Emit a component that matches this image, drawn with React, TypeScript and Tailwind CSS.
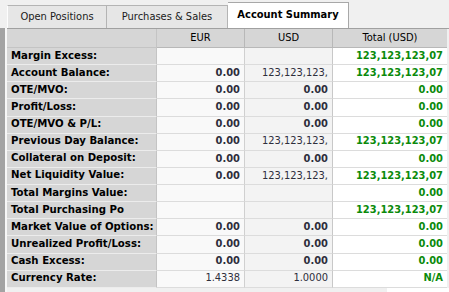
import React from "react";

type Row = {
  label: string;
  eur: string;
  eurBold?: boolean;
  usd: string;
  usdBold?: boolean;
  total: string;
};

const rows: Row[] = [
  { label: "Margin Excess:", eur: "", usd: "", total: "123,123,123,07" },
  { label: "Account Balance:", eur: "0.00", eurBold: true, usd: "123,123,123,", total: "123,123,123,07" },
  { label: "OTE/MVO:", eur: "0.00", eurBold: true, usd: "0.00", usdBold: true, total: "0.00" },
  { label: "Profit/Loss:", eur: "0.00", eurBold: true, usd: "0.00", usdBold: true, total: "0.00" },
  { label: "OTE/MVO & P/L:", eur: "0.00", eurBold: true, usd: "0.00", usdBold: true, total: "0.00" },
  { label: "Previous Day Balance:", eur: "0.00", eurBold: true, usd: "123,123,123,", total: "123,123,123,07" },
  { label: "Collateral on Deposit:", eur: "0.00", eurBold: true, usd: "0.00", usdBold: true, total: "0.00" },
  { label: "Net Liquidity Value:", eur: "0.00", eurBold: true, usd: "123,123,123,", total: "123,123,123,07" },
  { label: "Total Margins Value:", eur: "", usd: "", total: "0.00" },
  { label: "Total Purchasing Po", eur: "", usd: "", total: "123,123,123,07" },
  { label: "Market Value of Options:", eur: "0.00", eurBold: true, usd: "0.00", usdBold: true, total: "0.00" },
  { label: "Unrealized Profit/Loss:", eur: "0.00", eurBold: true, usd: "0.00", usdBold: true, total: "0.00" },
  { label: "Cash Excess:", eur: "0.00", eurBold: true, usd: "0.00", usdBold: true, total: "0.00" },
  { label: "Currency Rate:", eur: "1.4338", usd: "1.0000", total: "N/A" },
];

const font = { fontFamily: '"DejaVu Sans Condensed", "DejaVu Sans", sans-serif' };

export default function App() {
  return (
    <div
      className="w-[449px] h-[292px] bg-[#f0f0f0] overflow-hidden flex flex-col text-[11px] text-black"
      style={font}
    >
      {/* Tab strip */}
      <div className="h-[28px] flex items-end pl-[7px] shrink-0">
        <div className="h-[23px] w-[100px] flex items-center justify-center bg-[#e6e6e6] border border-b-0 border-[#b4b4b4] border-l-[#fdfdfd] text-[#1a1a1a]">
          Open Positions
        </div>
        <div className="h-[23px] w-[121px] flex items-center justify-center bg-[#e6e6e6] border border-l-0 border-b-0 border-[#b4b4b4] text-[#1a1a1a]">
          Purchases &amp; Sales
        </div>
        <div className="h-[26px] w-[121px] flex items-center justify-center bg-white border border-l-0 border-b-0 border-[#a8a8a8] font-bold">
          Account Summary
        </div>
      </div>

      {/* Body */}
      <div className="flex flex-1 min-h-0">
        <div className="w-[5px] bg-[#a3a3a3]" />
        <div className="w-[2px] bg-[#f7f7f7]" />
        <div className="flex flex-col w-[442px]">
          <div className="grid grid-cols-[150px_88px_88px_114px] grid-rows-[19px_repeat(14,17.14px)] border-t border-[#a0a0a0]">
            {/* Header */}
            <div className="bg-[#d6d6d6] border-r border-b border-[#c4c4c4]" />
            <div className="bg-[#d6d6d6] border-r border-b border-[#b8b8b8] flex items-center justify-center">EUR</div>
            <div className="bg-[#d6d6d6] border-r border-b border-[#b8b8b8] flex items-center justify-center">USD</div>
            <div className="bg-[#d6d6d6] border-b border-[#b8b8b8] flex items-center justify-center">Total (USD)</div>
            {rows.map((r) => (
              <React.Fragment key={r.label}>
                <div className="bg-[#d6d6d6] border-b border-r border-b-[#ececec] border-r-[#c4c4c4] flex items-center pl-[4px] font-bold text-[11.3px] whitespace-nowrap overflow-hidden">
                  {r.label}
                </div>
                <div
                  className={`bg-[#f9f9f9] border-b border-r border-b-[#dcdcdc] border-r-[#d0d0d0] flex items-center justify-end pr-[4px] text-[#2e2e3c] ${r.eurBold ? "font-bold" : ""}`}
                >
                  {r.eur}
                </div>
                <div
                  className={`bg-[#f3f3f3] border-b border-r border-b-[#dcdcdc] border-r-[#c8c8c8] flex items-center justify-end pr-[4px] text-[#2e2e3c] ${r.usdBold ? "font-bold" : ""}`}
                >
                  {r.usd}
                </div>
                <div className="bg-white border-b border-[#dcdcdc] flex items-center justify-end pr-[4px] font-bold text-[#0b8a0b]">
                  {r.total}
                </div>
              </React.Fragment>
            ))}
          </div>
          <div className="flex-1 flex">
            <div className="w-[380px] bg-[#f0f0f0]" />
            <div className="flex-1 bg-white" />
          </div>
        </div>
      </div>
    </div>
  );
}
